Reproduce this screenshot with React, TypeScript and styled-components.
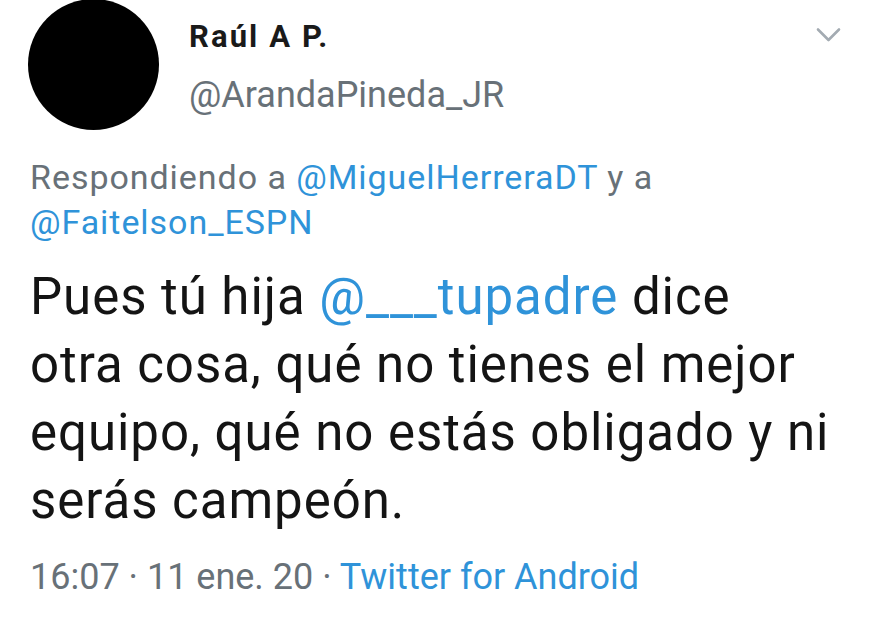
import React from "react";
import styled, { createGlobalStyle } from "styled-components";

const Global = createGlobalStyle`
  html, body { margin: 0; padding: 0; background: #fff; }
  body { font-family: Roboto, "Noto Sans", sans-serif; }
`;

const Card = styled.div`
  width: 869px;
  height: 620px;
  box-sizing: border-box;
  background: #fff;
  padding: 0 0 0 30px;
  overflow: hidden;
`;

const Header = styled.div`
  display: flex;
  align-items: flex-start;
  height: 155px;
`;

const Avatar = styled.div`
  width: 131px;
  height: 131px;
  border-radius: 50%;
  background: #000;
  margin: -1px 0 0 -2px;
  flex-shrink: 0;
`;

const Names = styled.div`
  display: flex;
  flex-direction: column;
  margin-left: 30px;
  padding-top: 17px;
  flex: 1;
`;

const Name = styled.div`
  font-weight: 700;
  font-size: 31px;
  letter-spacing: 2.1px;
  color: #1a1a1a;
  line-height: 40px;
`;

const Handle = styled.div`
  font-size: 36px;
  color: #687178;
  line-height: 45px;
  margin-top: 16px;
`;

const Chevron = styled.div`
  margin: 27px 28px 0 0;
  color: #a3abb2;
  line-height: 0;
`;

const Reply = styled.div`
  font-size: 34px;
  letter-spacing: 0.95px;
  line-height: 45px;
  color: #687178;
  width: 700px;
`;

const Link = styled.span`
  color: #2f93d9;
`;

const Body = styled.div`
  font-size: 51px;
  letter-spacing: 0.95px;
  line-height: 68px;
  color: #141414;
  margin-top: 18px;
  width: 804px;
`;

const Footer = styled.div`
  font-size: 36px;
  line-height: 45px;
  color: #687178;
  margin-top: 20px;
`;

export default function App() {
  return (
    <>
      <Global />
      <Card>
        <Header>
          <Avatar />
          <Names>
            <Name>Raúl A P.</Name>
            <Handle>@ArandaPineda_JR</Handle>
          </Names>
          <Chevron>
            <svg width="25" height="16" viewBox="0 0 25 16" fill="none">
              <path d="M2 2.5 L12.5 13 L23 2.5" stroke="currentColor" strokeWidth="2.6" strokeLinecap="round" strokeLinejoin="round" />
            </svg>
          </Chevron>
        </Header>
        <Reply>
          Respondiendo a <Link>@MiguelHerreraDT</Link> y a <Link>@Faitelson_ESPN</Link>
        </Reply>
        <Body>
          Pues tú hija <Link>@___tupadre</Link> dice otra cosa, qué no tienes el mejor equipo, qué no estás obligado y ni serás campeón.
        </Body>
        <Footer>
          16:07 · 11 ene. 20 · <Link>Twitter for Android</Link>
        </Footer>
      </Card>
    </>
  );
}
